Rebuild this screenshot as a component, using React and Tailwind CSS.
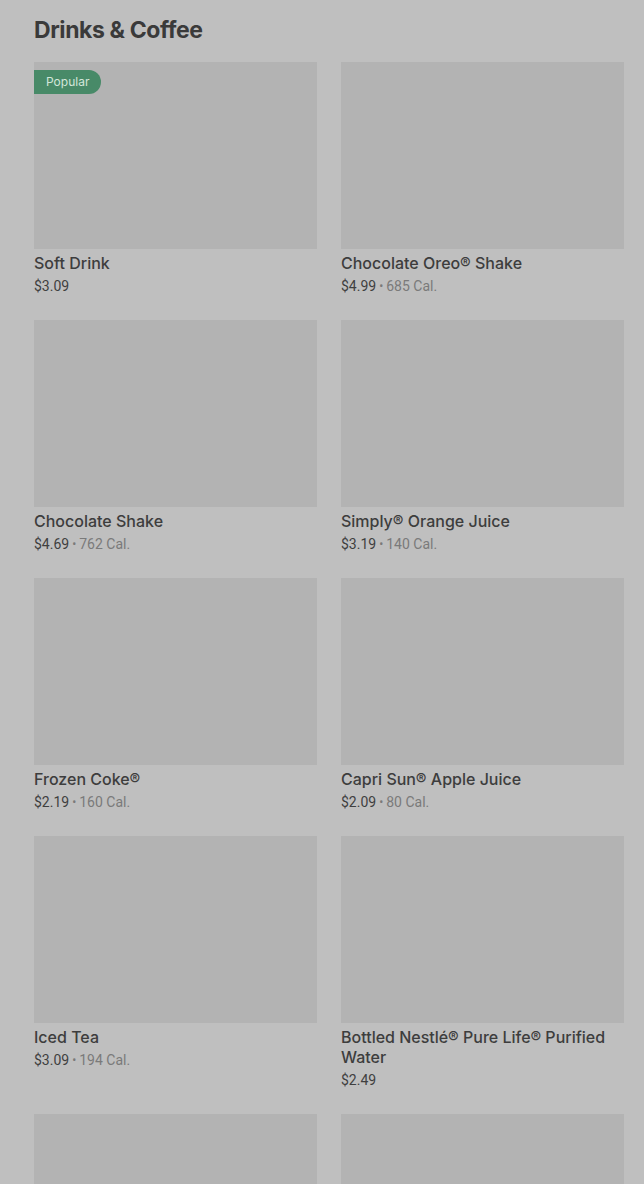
import React from "react";

const items = [
  { name: "Soft Drink", price: "$3.09", popular: true },
  { name: "Chocolate Oreo® Shake", price: "$4.99", cal: "685 Cal." },
  { name: "Chocolate Shake", price: "$4.69", cal: "762 Cal." },
  { name: "Simply® Orange Juice", price: "$3.19", cal: "140 Cal." },
  { name: "Frozen Coke®", price: "$2.19", cal: "160 Cal." },
  { name: "Capri Sun® Apple Juice", price: "$2.09", cal: "80 Cal." },
  { name: "Iced Tea", price: "$3.09", cal: "194 Cal." },
  { name: "Bottled Nestlé® Pure Life® Purified Water", price: "$2.49" },
  { imageOnly: true },
  { imageOnly: true },
];

function Card({ item }) {
  return (
    <div className="flex flex-col">
      <div className="relative h-[187px] bg-[#b3b3b3]">
        {item.popular && (
          <span className="absolute left-0 top-[8px] h-[24px] pl-[12px] pr-[12px] flex items-center rounded-r-full bg-[#488a68] text-[12px] text-[#d3e6da]">
            Popular
          </span>
        )}
      </div>
      {!item.imageOnly && (
        <>
          <div className="mt-[4px] text-[16px] leading-[20px] font-medium text-[#3d3d3d]">
            {item.name}
          </div>
          <div
            className="mt-[3px] h-[20px] flex items-center text-[14px] leading-[20px] text-[#3f3f3f]"
            style={{ fontFamily: "Roboto, 'Noto Sans', sans-serif" }}
          >
            <span>{item.price}</span>
            {item.cal && (
              <>
                <span className="mx-[3px] text-[12px] leading-[20px] text-[#7a7a7a]">•</span>
                <span className="text-[#7a7a7a]">{item.cal}</span>
              </>
            )}
          </div>
        </>
      )}
    </div>
  );
}

export default function App() {
  return (
    <div
      className="h-[1184px] overflow-hidden bg-[#bfbfbf] pl-[34px] pr-[20px]"
      style={{ fontFamily: "Inter, 'Noto Sans', sans-serif" }}
    >
      <h2 className="pt-[15px] h-[62px] text-[23px] leading-[30px] font-bold tracking-[-0.4px] text-[#3a3a3a]">
        Drinks &amp; Coffee
      </h2>
      <div className="grid grid-cols-2 gap-x-[24px] gap-y-[24px]">
        {items.map((it, i) => (
          <Card key={i} item={it} />
        ))}
      </div>
    </div>
  );
}
